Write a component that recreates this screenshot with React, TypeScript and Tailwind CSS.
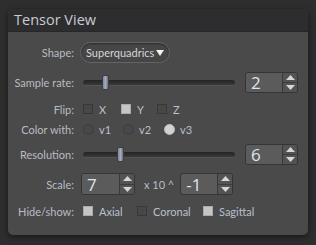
const font = { fontFamily: '"Open Sans", "DejaVu Sans", sans-serif' };
const small = '"Lato", "Open Sans", sans-serif';

function Label({ children }: { children: string }) {
  return (
    <div className="w-[66px] shrink-0 text-right text-[11px] leading-none text-[#b9bcc2]" style={{ fontFamily: small }}>
      {children}
    </div>
  );
}

function Check({ on, label, w }: { on?: boolean; label: string; w: string }) {
  return (
    <div className={`flex items-center ${w}`}>
      <div
        className={`h-[10px] w-[10px] shrink-0 border ${
          on ? "border-[#a9a9a9] bg-[#c6c6c6]" : "border-[#383838] bg-[#474747]"
        }`}
      />
      <span className="ml-[6px] text-[11px] leading-none text-[#b9c0cc]" style={{ fontFamily: small }}>
        {label}
      </span>
    </div>
  );
}

function Radio({ on, label, w }: { on?: boolean; label: string; w: string }) {
  return (
    <div className={`flex items-center ${w}`}>
      <div
        className={`h-[11px] w-[11px] shrink-0 rounded-full border ${
          on ? "border-[#bdbdbd] bg-[#d2d2d2]" : "border-[#3d3d3d] bg-[#484848]"
        }`}
      />
      <span className="ml-[5px] text-[11px] leading-none text-[#b9c0cc]" style={{ fontFamily: small }}>
        {label}
      </span>
    </div>
  );
}

function Slider({ pos }: { pos: number }) {
  return (
    <div className="relative h-[6px] w-[152px] rounded-full border-b border-[#555] bg-gradient-to-b from-[#242424] to-[#383838]">
      <div
        className="absolute top-[-5px] h-[15px] w-[7px] rounded-[2px] border border-[#3a3d44] bg-gradient-to-r from-[#7e8595] via-[#a5abb8] to-[#6c7282]"
        style={{ left: pos }}
      />
    </div>
  );
}

function Arrow({ up }: { up?: boolean }) {
  return (
    <svg width="9" height="5" viewBox="0 0 9 5">
      <path d={up ? "M0 5 L4.5 0 L9 5 Z" : "M0 0 L4.5 5 L9 0 Z"} fill="#d4d6da" />
    </svg>
  );
}

function Spin({ value, w }: { value: string; w: string }) {
  return (
    <div className={`flex h-full ${w} overflow-hidden rounded-[3px] border border-[#353535]`}>
      <div className="flex flex-1 items-center bg-[#5b5b5b] pl-[5px] text-[17px] leading-none text-[#dfe4ee]">
        {value}
      </div>
      <div className="flex w-[15px] flex-col border-l border-[#383838] bg-[#535353]">
        <div className="flex flex-1 items-center justify-center border-b border-[#3c3c3c]">
          <Arrow up />
        </div>
        <div className="flex flex-1 items-center justify-center">
          <Arrow />
        </div>
      </div>
    </div>
  );
}

export default function App() {
  return (
    <div className="h-[245px] w-[316px] bg-[#2e2e2e] pl-[8px] pt-[9px]" style={font}>
      <div className="flex h-[226px] w-[300px] flex-col overflow-hidden rounded-[5px] bg-[#4a4a4a] shadow-[0_2px_6px_rgba(0,0,0,0.5)]">
        <div className="flex h-[23px] items-center border-b border-[#272727] bg-[#2d2d2f] pl-[6px] text-[14.5px] text-[#c9ccd2]">
          Tensor View
        </div>

        <div className="mt-[10px] flex h-[21px] items-center">
          <Label>Shape:</Label>
          <div className="ml-[6px] flex h-full w-[90px] items-center rounded-full border border-[#646464] bg-[#464646] pl-[5px] pr-[5px] shadow-[inset_0_1px_2px_rgba(0,0,0,0.4)]">
            <span className="text-[11px] leading-none text-[#d3d6dc]" style={{ fontFamily: small }}>
              Superquadrics
            </span>
            <svg className="ml-auto" width="8" height="6" viewBox="0 0 8 6">
              <path d="M0 0 L8 0 L4 6 Z" fill="#f2f2f2" />
            </svg>
          </div>
        </div>

        <div className="mt-[9px] flex h-[21px] items-center">
          <Label>Sample rate:</Label>
          <div className="ml-[9px]">
            <Slider pos={19} />
          </div>
          <div className="ml-[10px] h-full">
            <Spin value="2" w="w-[53px]" />
          </div>
        </div>

        <div className="mt-[11px] flex h-[10px] items-center">
          <Label>Flip:</Label>
          <div className="ml-[9px] flex">
            <Check label="X" w="w-[38px]" />
            <Check on label="Y" w="w-[36px]" />
            <Check label="Z" w="w-[30px]" />
          </div>
        </div>

        <div className="mt-[10px] flex h-[10px] items-center">
          <Label>Color with:</Label>
          <div className="ml-[9px] flex">
            <Radio label="v1" w="w-[40px]" />
            <Radio label="v2" w="w-[41px]" />
            <Radio on label="v3" w="w-[30px]" />
          </div>
        </div>

        <div className="mt-[10px] flex h-[21px] items-center">
          <Label>Resolution:</Label>
          <div className="ml-[9px]">
            <Slider pos={34} />
          </div>
          <div className="ml-[10px] h-full">
            <Spin value="6" w="w-[53px]" />
          </div>
        </div>

        <div className="mt-[8px] flex h-[22px] items-center">
          <Label>Scale:</Label>
          <div className="ml-[7px] h-full">
            <Spin value="7" w="w-[54px]" />
          </div>
          <span className="ml-[9px] text-[11px] leading-none text-[#b9bcc2]" style={{ fontFamily: small }}>
            x 10 ^
          </span>
          <div className="ml-[6px] h-full">
            <Spin value="-1" w="w-[53px]" />
          </div>
        </div>

        <div className="mt-[11px] flex h-[10px] items-center">
          <Label>Hide/show:</Label>
          <div className="ml-[9px] flex">
            <Check on label="Axial" w="w-[54px]" />
            <Check label="Coronal" w="w-[66px]" />
            <Check on label="Sagittal" w="w-[60px]" />
          </div>
        </div>
      </div>
    </div>
  );
}
